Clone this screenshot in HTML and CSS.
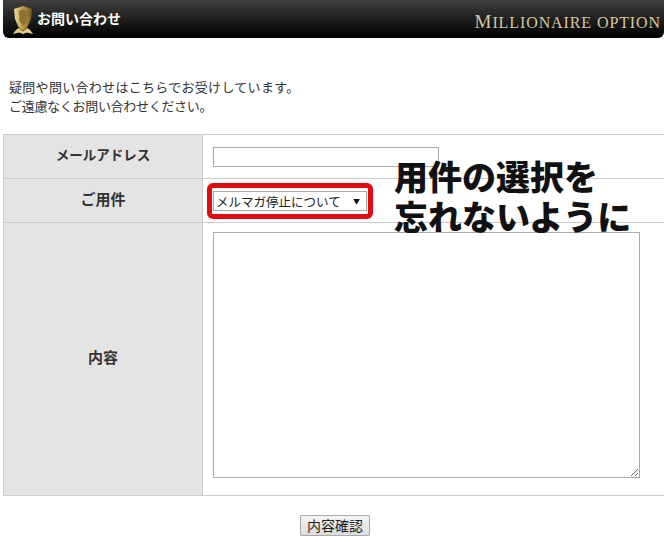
FILE: index.html
```html
<!DOCTYPE html>
<html lang="ja">
<head>
  <meta charset="UTF-8"/>
  <meta name="viewport" content="width=device-width, initial-scale=1.0"/>
  <title>お問い合わせ | Millionaire Option</title>
  <link rel="stylesheet" href="styles.css">
</head>
<body>
  <!-- Header -->
  <header class="head">
    <svg class="shield" width="22" height="30" viewBox="0 0 22 30" aria-hidden="true">
      <defs>
        <linearGradient id="gold" x1="0" y1="0" x2="1" y2="0">
          <stop offset="0" stop-color="#efdc9c"/>
          <stop offset=".55" stop-color="#b59540"/>
          <stop offset="1" stop-color="#6f5720"/>
        </linearGradient>
      </defs>
      <path d="M2 4 L11 1 L20 4 L19 14 L15.500 22 L11 26 L6.500 22 L3 14 Z" fill="url(#gold)"/>
      <path d="M7 6 L11 4.500 L15 6 L14.500 16 L11 21 L7.500 16 Z" fill="#8c7330"/>
      <path d="M1 29 Q4 24 7 23 L11 26.500 L15 23 Q18 24 21 29 L15 27.500 L11 29 L7 27.500 Z" fill="#e3cb85"/>
    </svg>
    <h1>お問い合わせ</h1>
    <div class="brand">Millionaire option</div>
  </header>

  <!-- Lead -->
  <p class="lead">
    <span class="lead-a">疑問や問い合わせはこちらでお受けしています。</span><br>
    <span class="lead-b">ご遠慮なくお問い合わせください。</span>
  </p>

  <!-- Form -->
  <form class="contact">
    <table class="form-table">
      <tr class="row-mail">
        <th>メールアドレス</th>
        <td><input type="text" class="mail"></td>
      </tr>
      <tr class="row-subject">
        <th>ご用件</th>
        <td>
          <div class="subject-wrap">
            <select class="subject">
              <option>メルマガ停止について</option>
            </select>
          </div>
        </td>
      </tr>
      <tr class="row-body">
        <th>内容</th>
        <td><textarea class="body-text"></textarea></td>
      </tr>
    </table>
    <div class="submit"><button type="button">内容確認</button></div>

    <!-- Annotation over the form -->
    <div class="mark"></div>
    <div class="note">用件の選択を<br>忘れないように</div>
  </form>
</body>
</html>
```

FILE: styles.css
```css
* { box-sizing: border-box; }
html, body { height: 100%; }
body {
  margin: 0;
  background: #fff;
  color: #222;
  font-family: "Noto Sans CJK JP", "Liberation Sans", sans-serif;
  font-size: 13px;
  overflow: hidden;
}

/* Header */
.head {
  height: 38px;
  margin-left: 3px;
  padding-left: 9px;
  display: flex;
  align-items: center;
  background: linear-gradient(#3f3f3f, #000);
  border-radius: 0 0 6px 6px;
  color: #fff;
}
.shield { flex: none; margin-top: 1px; }
.head h1 {
  margin: 0 0 0 3px;
  font-size: 14px;
  font-weight: 700;
  position: relative;
  top: -1px;
}
.brand {
  margin-left: auto;
  margin-right: 3px;
  font-family: "Liberation Serif", serif;
  font-size: 16px;
  letter-spacing: .9px;
  text-transform: uppercase;
  color: #d6c79f;
  white-space: nowrap;
  position: relative;
  top: 3px;
}
.brand::first-letter { font-size: 19px; }

/* Lead */
.lead {
  margin: 39px 0 0 9px;
  font-size: 13px;
  line-height: 19px;
  color: #333;
}
.lead-a { letter-spacing: .3px; }
.lead-b { letter-spacing: -.3px; }

/* Table */
.contact { position: relative; }
.form-table {
  width: 661px;
  margin: 19px 0 0 3px;
  border-collapse: collapse;
  table-layout: fixed;
}
.form-table th,
.form-table td {
  padding: 0;
  border-top: 1px solid #ccc;
  border-bottom: 1px solid #ccc;
}
.form-table th {
  width: 199px;
  padding-bottom: 5px;
  background: #e4e4e4;
  border-left: 1px solid #ccc;
  border-right: 1px solid #ccc;
  font-size: 15px;
  font-weight: 700;
  color: #333;
  text-align: center;
}
.row-mail th { font-size: 13.500px; }
.form-table td { padding-left: 10px; }
.row-mail { height: 44px; }
.row-subject { height: 44px; }
.row-body { height: 273px; }

.mail {
  display: block;
  width: 226px;
  height: 20px;
  border: 1px solid #aaa;
  padding: 1px 2px;
  background: #fff;
}
.subject-wrap {
  position: relative;
  width: 154px;
}
.subject-wrap::after {
  content: "▼";
  position: absolute;
  right: 7px;
  top: 3px;
  font-size: 7px;
  line-height: 14px;
  color: #111;
  pointer-events: none;
}
.subject {
  display: block;
  width: 154px;
  height: 20px;
  padding: 0 0 0 2px;
  border: 1px solid #aaa;
  border-radius: 0;
  appearance: none;
  background: #fff;
  font-family: inherit;
  font-size: 12.500px;
  color: #222;
}
.body-text {
  display: block;
  width: 427px;
  height: 246px;
  margin-bottom: 8px;
  border: 1px solid #aaa;
  background: #fff;
}

/* Submit */
.submit {
  margin-top: 19px;
  padding-left: 300px;
}
.submit button {
  display: block;
  width: 70px;
  height: 21px;
  padding: 0;
  border: 1px solid #a9a9a9;
  border-radius: 1px;
  background: linear-gradient(#f4f4f4, #dcdcdc);
  font-family: inherit;
  font-size: 14px;
  line-height: 19px;
  color: #222;
}

/* Annotation */
.mark {
  position: absolute;
  left: 207px;
  top: 49px;
  width: 166px;
  height: 36px;
  border: 5px solid #e00c12;
  border-radius: 6px;
}
.note {
  position: absolute;
  left: 394px;
  top: 22px;
  font-size: 34px;
  font-weight: 900;
  line-height: 40px;
  color: #111;
  white-space: nowrap;
}
```
